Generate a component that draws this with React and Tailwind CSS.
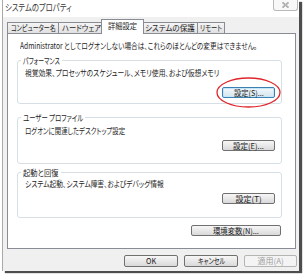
import React, { useLayoutEffect, useRef, useState } from "react"

const jp = "font-['Noto_Sans_CJK_JP','Noto_Sans_CJK_SC',sans-serif] [font-feature-settings:'palt']"

// squeezes a text horizontally so it fills the width given by className
function Fit({ className = "", children }) {
  const box = useRef(null)
  const txt = useRef(null)
  const [k, setK] = useState(1)

  useLayoutEffect(() => {
    const nat = txt.current.offsetWidth
    if (nat) setK(box.current.clientWidth / nat)
  }, [])

  return (
    <span ref={box} className={`inline-block whitespace-nowrap ${className}`}>
      <span ref={txt} className="inline-block origin-left" style={{ transform: `scaleX(${k})` }}>
        {children}
      </span>
    </span>
  )
}

const tabs = [
  { label: "コンピューター名", fit: "w-[45px]", cls: "w-[51px] border-l" },
  { label: "ハードウェア", fit: "w-[39px]", cls: "w-[45px] border-l" },
  { label: "詳細設定", fit: "w-[29px]", active: true },
  { label: "システムの保護", fit: "w-[50px]", cls: "w-[55px] border-l" },
  { label: "リモート", fit: "w-[22px]", cls: "w-[28px] border-l border-r" },
]

function Button({ label, fit, w, h = "h-[11px]", kind }) {
  let look = "border-[#707070] bg-gradient-to-b from-[#f7f7f7] to-[#d9d9d9] text-[#1a1a1a]"
  if (kind === "default")
    look = "border-[#3c7fb1] bg-gradient-to-b from-[#f3f8fb] to-[#d3e4ee] text-[#1a1a1a] shadow-[inset_0_0_0_1px_#c4e6f8]"
  if (kind === "disabled") look = "border-[#b5b5b5] bg-[#f4f4f4] text-[#a0a0a0]"
  return (
    <div className={`${w} ${h} ${look} flex items-center justify-center rounded-[2px] border text-[8px] leading-none`}>
      <Fit className={fit}>{label}</Fit>
    </div>
  )
}

function Group({ title, titleFit, text, textFit, button, cls, textCls, btnCls }) {
  return (
    <fieldset className={`ml-[9px] w-[265px] rounded-[3px] border border-[#d5dfe5] ${cls}`}>
      <legend className="ml-[3px] px-[2px] text-[8.5px] leading-[9px]">
        <Fit className={titleFit}>{title}</Fit>
      </legend>
      <div className="pl-[7px]">
        <div className={`h-[9px] text-[8.5px] leading-[9px] ${textCls}`}>
          <Fit className={textFit}>{text}</Fit>
        </div>
        <div className={`flex justify-end pr-[6px] ${btnCls}`}>{button}</div>
      </div>
    </fieldset>
  )
}

export default function App() {
  return (
    <div className={`h-[275px] w-[304px] overflow-hidden bg-white text-[#1e1e1e] ${jp}`}>
      <div className="relative ml-[2px] flex h-[271px] w-[297px] flex-col border-l border-[#a9a9a9] bg-[#f0f0f0] shadow-[3px_2px_1px_#4d4d4d]">
        <div className="h-[17px] bg-white pl-[2px] pt-[3px] text-[9px] leading-[9px] text-[#333]">
          <Fit className="w-[67px]">システムのプロパティ</Fit>
        </div>
        <div className="absolute right-[1px] top-0 flex h-[11px] w-[25px] items-center justify-center rounded-b-[3px] border border-t-0 border-[#b9b9b9] bg-[#f8f8f8]">
          <svg width="7" height="6" viewBox="0 0 7 6">
            <path d="M0.5 0.5 L6.5 5.5 M6.5 0.5 L0.5 5.5" stroke="#8a8a8a" strokeWidth="1.6" />
            <path d="M0.5 0.5 L6.5 5.5 M6.5 0.5 L0.5 5.5" stroke="#f2f2f2" strokeWidth="0.5" />
          </svg>
        </div>

        <div className="ml-[4px] flex h-[16px] items-end">
          {tabs.map((t) =>
            t.active ? (
              <div
                key={t.label}
                className="relative z-10 -mx-[2px] -mb-px flex h-[15px] w-[43px] items-center justify-center border border-b-0 border-[#898c95] bg-white pb-[2px] text-[8px] leading-none"
              >
                <Fit className={t.fit}>{t.label}</Fit>
              </div>
            ) : (
              <div
                key={t.label}
                className={`flex h-[11px] items-center justify-center border-t border-[#898c95] bg-gradient-to-b from-[#f4f4f4] to-[#e1e1e1] text-[8px] leading-none ${t.cls}`}
              >
                <Fit className={t.fit}>{t.label}</Fit>
              </div>
            )
          )}
        </div>

        <div className="relative ml-[4px] h-[216px] w-[289px] border border-[#898c95] bg-white">
          <div className="ml-[12px] mt-[7px] h-[9px] text-[8.5px] leading-[9px]">
            <Fit className="w-[237px]">Administrator としてログオンしない場合は、これらのほとんどの変更はできません。</Fit>
          </div>

          <Group
            title="パフォーマンス"
            titleFit="w-[37px]"
            text="視覚効果、プロセッサのスケジュール、メモリ使用、および仮想メモリ"
            textFit="w-[194px]"
            cls="mt-[6px] h-[48px]"
            textCls="mt-[3px]"
            btnCls="mt-[10px]"
            button={<Button label="設定(S)..." fit="w-[30px]" w="w-[53px]" kind="default" />}
          />
          <Group
            title="ユーザー プロファイル"
            titleFit="w-[60px]"
            text="ログオンに関連したデスクトップ設定"
            textFit="w-[100px]"
            cls="mt-[9px] h-[51px]"
            textCls="mt-[4px]"
            btnCls="mt-[5px]"
            button={<Button label="設定(E)..." fit="w-[31px]" w="w-[53px]" />}
          />
          <Group
            title="起動と回復"
            titleFit="w-[36px]"
            text="システム起動、システム障害、およびデバッグ情報"
            textFit="w-[139px]"
            cls="mt-[4px] h-[50px]"
            textCls="mt-[2px]"
            btnCls="mt-[5px]"
            button={<Button label="設定(T)" fit="w-[26px]" w="w-[53px]" />}
          />

          <div className="mt-[7px] flex justify-end pr-[14px]">
            <Button label="環境変数(N)..." fit="w-[46px]" w="w-[90px]" />
          </div>

          <svg className="absolute left-[208px] top-[43px]" width="65" height="31" viewBox="0 0 65 31">
            <ellipse cx="32.5" cy="15.5" rx="31.5" ry="14.5" fill="none" stroke="#e0262b" strokeWidth="1.3" />
          </svg>
        </div>

        <div className="mt-[6px] flex justify-end gap-[6px] pr-[2px]">
          <Button label="OK" fit="w-[10px]" w="w-[54px]" h="h-[12px]" />
          <Button label="キャンセル" fit="w-[27px]" w="w-[54px]" h="h-[12px]" />
          <Button label="適用(A)" fit="w-[26px]" w="w-[53px]" h="h-[12px]" kind="disabled" />
        </div>
      </div>
    </div>
  )
}
